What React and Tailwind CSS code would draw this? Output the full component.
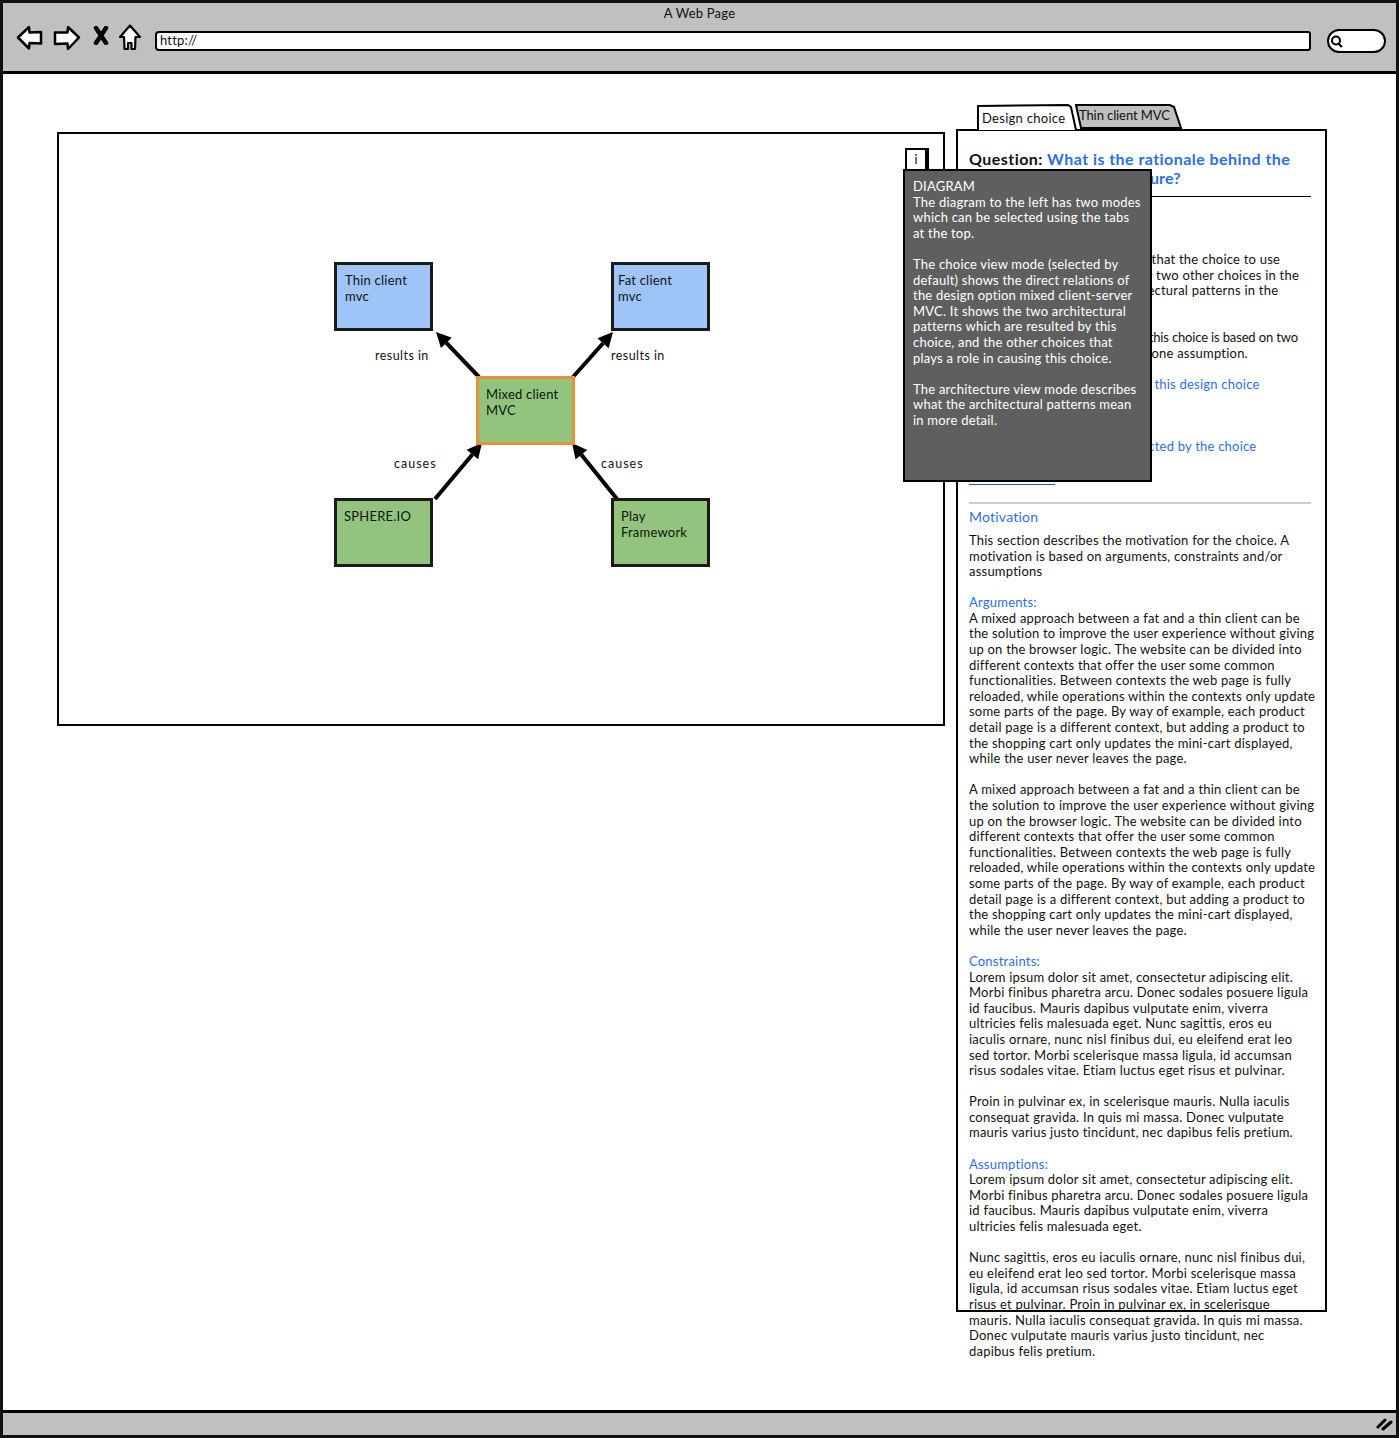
const argumentLines = [
  'A mixed approach between a fat and a thin client can be',
  'the solution to improve the user experience without giving',
  'up on the browser logic. The website can be divided into',
  'different contexts that offer the user some common',
  'functionalities. Between contexts the web page is fully',
  'reloaded, while operations within the contexts only update',
  'some parts of the page. By way of example, each product',
  'detail page is a different context, but adding a product to',
  'the shopping cart only updates the mini-cart displayed,',
  'while the user never leaves the page.',
]

const topLines = [
  { t: 'This section describes the fact that the choice to use' },
  { t: 'mixed client-server MVC led to two other choices in the' },
  { t: 'diagram and also to two architectural patterns in the' },
  { t: 'diagram.' },
  { t: '' },
  { t: 'The motivation then shows that this choice is based on two', tight: true },
  { t: 'arguments, one constraint and one assumption.' },
  { t: '' },
  { t: 'Other choices that depends on this design choice', blue: true },
  { t: '' },
  { t: '' },
  { t: '' },
  { t: 'The architectural patterns affected by the choice', blue: true },
  { t: '' },
  { t: 'Related choice', link: true },
]

const bodyLines = [
  { t: 'This section describes the motivation for the choice. A' },
  { t: 'motivation is based on arguments, constraints and/or' },
  { t: 'assumptions' },
  { t: '' },
  { t: 'Arguments:', blue: true },
  ...argumentLines.map((t) => ({ t })),
  { t: '' },
  ...argumentLines.map((t) => ({ t })),
  { t: '' },
  { t: 'Constraints:', blue: true },
  { t: 'Lorem ipsum dolor sit amet, consectetur adipiscing elit.' },
  { t: 'Morbi finibus pharetra arcu. Donec sodales posuere ligula' },
  { t: 'id faucibus. Mauris dapibus vulputate enim, viverra' },
  { t: 'ultricies felis malesuada eget. Nunc sagittis, eros eu' },
  { t: 'iaculis ornare, nunc nisl finibus dui, eu eleifend erat leo' },
  { t: 'sed tortor. Morbi scelerisque massa ligula, id accumsan' },
  { t: 'risus sodales vitae. Etiam luctus eget risus et pulvinar.' },
  { t: '' },
  { t: 'Proin in pulvinar ex, in scelerisque mauris. Nulla iaculis' },
  { t: 'consequat gravida. In quis mi massa. Donec vulputate' },
  { t: 'mauris varius justo tincidunt, nec dapibus felis pretium.' },
  { t: '' },
  { t: 'Assumptions:', blue: true },
  { t: 'Lorem ipsum dolor sit amet, consectetur adipiscing elit.' },
  { t: 'Morbi finibus pharetra arcu. Donec sodales posuere ligula' },
  { t: 'id faucibus. Mauris dapibus vulputate enim, viverra' },
  { t: 'ultricies felis malesuada eget.' },
  { t: '' },
  { t: 'Nunc sagittis, eros eu iaculis ornare, nunc nisl finibus dui,' },
  { t: 'eu eleifend erat leo sed tortor. Morbi scelerisque massa' },
  { t: 'ligula, id accumsan risus sodales vitae. Etiam luctus eget' },
  { t: 'risus et pulvinar. Proin in pulvinar ex, in scelerisque' },
  { t: 'mauris. Nulla iaculis consequat gravida. In quis mi massa.' },
  { t: 'Donec vulputate mauris varius justo tincidunt, nec' },
  { t: 'dapibus felis pretium.' },
]

const tooltipLines = [
  'DIAGRAM',
  'The diagram to the left has two modes',
  'which can be selected using the tabs',
  'at the top.',
  '',
  'The choice view mode (selected by',
  'default) shows the direct relations of',
  'the design option mixed client-server',
  'MVC. It shows the two architectural',
  'patterns which are resulted by this',
  'choice, and the other choices that',
  'plays a role in causing this choice.',
  '',
  'The architecture view mode describes',
  'what the architectural patterns mean',
  'in more detail.',
]

// regels onder elkaar, vaste hoogte zodat de tekst niet verschuift
const Lines = ({ lines }) => (
  <div className="text-[13px] leading-[15.6px] tracking-[0.22px] whitespace-nowrap text-[#111]">
    {lines.map((line, i) => (
      <div
        key={i}
        className={
          line.link
            ? 'h-[15.6px] text-[#1f5fc4] underline underline-offset-[2px]'
            : line.blue
              ? 'h-[15.6px] text-[#2c6fe8]'
              : line.tight
                ? 'h-[15.6px] tracking-[-0.15px]'
                : 'h-[15.6px]'
        }
      >
        {line.t}
      </div>
    ))}
  </div>
)

const Arrow = ({ x1, y1, x2, y2 }) => {
  const a = Math.atan2(y2 - y1, x2 - x1)
  const len = 15
  const half = 7.5
  const bx = x2 - Math.cos(a) * len
  const by = y2 - Math.sin(a) * len
  const px = -Math.sin(a) * half
  const py = Math.cos(a) * half
  return (
    <g>
      <line x1={x1} y1={y1} x2={bx} y2={by} stroke="#000" strokeWidth="4" />
      <polygon points={`${x2},${y2} ${bx + px},${by + py} ${bx - px},${by - py}`} fill="#000" />
    </g>
  )
}

const Node = ({ className, lines }) => (
  <div className={`absolute w-[99px] h-[69px] text-[13px] leading-[16px] tracking-[0.22px] text-[#111] ${className}`}>
    {lines.map((l) => (
      <div key={l}>{l}</div>
    ))}
  </div>
)

const Label = ({ className, children }) => (
  <div className={`absolute text-[12.5px] leading-[16px] text-[#111] whitespace-nowrap ${className}`}>
    {children}
  </div>
)

const Toolbar = () => (
  <div className="flex items-start h-[33px] pl-[13px] pr-[10px]">
    <svg width="27" height="26" viewBox="0 0 27 26" className="mt-[1px]">
      <path d="M2 12.5 L13 2 L13.5 7.5 L25 7 L25 18.5 L13.5 18 L13 23.5 Z" fill="#fff" stroke="#000" strokeWidth="2.5" strokeLinejoin="round" />
    </svg>
    <svg width="28" height="26" viewBox="0 0 28 26" className="ml-[10px] mt-[1px]">
      <path d="M26 12.5 L15 2 L14.5 7.5 L2 7.5 L2 19 L14.5 18.5 L15 24 Z" fill="#fff" stroke="#000" strokeWidth="2.5" strokeLinejoin="round" />
    </svg>
    <svg width="16" height="19" viewBox="0 0 16 19" className="ml-[12px] mt-[2px]">
      <path d="M3 2 L13 17 M13 2 L3 17" stroke="#000" strokeWidth="4.5" strokeLinecap="round" />
    </svg>
    <svg width="22" height="27" viewBox="0 0 22 27" className="ml-[10px]">
      <path d="M11 1.5 L21 13 L16.5 13 L16 25 L12.5 25 L12.5 19 L9 19 L9 25 L5.5 25 L5 13 L1 13 Z" fill="#fff" stroke="#000" strokeWidth="2.2" strokeLinejoin="round" />
    </svg>
    <div className="ml-[14px] mt-[7px] flex-1 h-[20px] bg-white border-[2px] border-black rounded-l-[4px] rounded-r-[3px] pl-[3px] text-[13px] leading-[15px] tracking-[0.2px] text-[#111]">
      http://
    </div>
    <div className="ml-[16px] mt-[5px] w-[59px] h-[24px] bg-white border-[2px] border-black rounded-[12px] flex items-center">
      <svg width="16" height="16" viewBox="0 0 16 16">
        <circle cx="7" cy="7.5" r="4" fill="#fff" stroke="#000" strokeWidth="2" />
        <line x1="9.5" y1="10.5" x2="13" y2="14" stroke="#000" strokeWidth="2.2" />
      </svg>
    </div>
  </div>
)

const Diagram = () => (
  <div className="relative mt-[28px] w-[888px] h-[594px] border-[2px] border-black bg-white shrink-0">
    <svg width="884" height="590" viewBox="59 135 884 590" className="absolute left-0 top-0">
      <Arrow x1={479} y1={378} x2={436} y2={333} />
      <Arrow x1={573} y1={378} x2={613} y2={333} />
      <Arrow x1={435} y1={500} x2={482} y2={444} />
      <Arrow x1={617} y1={500} x2={572} y2={444} />
    </svg>
    <Node className="left-[275px] top-[128px] pt-[7px] pl-[8px] bg-[#9fc5f8] border-[3px] border-[#1a1a1a]" lines={['Thin client', 'mvc']} />
    <Node className="left-[552px] top-[128px] pt-[7px] pl-[4px] bg-[#9fc5f8] border-[3px] border-[#1a1a1a]" lines={['Fat client', 'mvc']} />
    <Node className="left-[417px] top-[242px] pt-[7px] pl-[7px] bg-[#93c47d] border-[3px] border-[#e69138]" lines={['Mixed client', 'MVC']} />
    <Node className="left-[275px] top-[364px] pt-[7px] pl-[7px] bg-[#93c47d] border-[3px] border-[#1a1a1a]" lines={['SPHERE.IO']} />
    <Node className="left-[552px] top-[364px] pt-[7px] pl-[7px] bg-[#93c47d] border-[3px] border-[#1a1a1a]" lines={['Play', 'Framework']} />
    <Label className="left-[316px] top-[214px] tracking-[0.45px]">results in</Label>
    <Label className="left-[552px] top-[214px] tracking-[0.45px]">results in</Label>
    <Label className="left-[335px] top-[322px] tracking-[1px]">causes</Label>
    <Label className="left-[542px] top-[322px] tracking-[1px]">causes</Label>
    <div className="absolute left-[846px] top-[14px] w-[24px] h-[22px] bg-white border-t-[2px] border-l-[2px] border-black border-r-[4px] text-center text-[13px] leading-[19px] text-[#111]">
      i
    </div>
  </div>
)

const Tabs = () => (
  <div className="flex h-[26px] ml-[21px] relative z-10 -mb-[1px]">
    <div className="relative w-[96px] h-[27px] pt-[6px] pl-[5px] text-[13px] leading-[16px] tracking-[0.28px] text-[#111]">
      <svg width="100" height="27" viewBox="0 0 100 27" className="absolute left-0 top-0 -z-10">
        <path d="M1 26 L1 2 L91 1 L94 3 L99 26" fill="#fff" stroke="#000" strokeWidth="2" />
      </svg>
      Design choice
    </div>
    <div className="relative w-[108px] h-[25px] pt-[3px] pl-[6px] text-[13px] leading-[16px] tracking-[-0.1px] text-[#111]">
      <svg width="110" height="25" viewBox="0 0 110 25" className="absolute left-0 top-0 -z-10">
        <path d="M3 1 L97 1 L101 3 L108 24 L8 24 Z" fill="#c0c0c0" stroke="#000" strokeWidth="2" />
      </svg>
      Thin client MVC
    </div>
  </div>
)

const Panel = () => (
  <div className="ml-[11px] w-[371px] shrink-0">
    <Tabs />
    <div className="h-[1183px] border-[2px] border-black bg-white pl-[11px] pr-[14px] pt-[18px]">
      <div className="text-[16px] leading-[19px] font-bold tracking-[0.45px] whitespace-nowrap text-[#111]">
        <div>
          Question: <span className="text-[#2c6fe8]">What is the rationale behind the</span>
        </div>
        <div className="text-[#2c6fe8] tracking-[0.15px]">the mixed MVC architecture?</div>
      </div>
      <div className="mt-[9px] h-[1px] bg-black" />
      <div className="mt-[14px] h-[41px] text-[14px] leading-[20px] text-[#2c6fe8]">Summary</div>
      <Lines lines={topLines} />
      <div className="mt-[16px] h-[2px] bg-[#cfcfcf]" />
      <div className="text-[14px] leading-[20px] tracking-[0.22px] text-[#2c6fe8] mt-[3px] mb-[6px]">Motivation</div>
      <Lines lines={bodyLines} />
    </div>
  </div>
)

const Tooltip = () => (
  <div className="absolute left-[900px] top-[95px] w-[249px] h-[313px] bg-[#5f5f5f] border-[2px] border-black pl-[8px] pt-[8px] text-[13px] leading-[15.6px] tracking-[0.22px] text-white whitespace-nowrap z-20">
    {tooltipLines.map((l, i) => (
      <div key={i} className="h-[15.6px]">
        {l}
      </div>
    ))}
  </div>
)

const App = () => (
  <div className="w-[1399px] h-[1438px] flex flex-col border-[3px] border-[#111] bg-white overflow-hidden font-['Lato','Open_Sans',sans-serif]">
    <div className="h-[71px] shrink-0 bg-[#c0c0c0] border-b-[3px] border-black">
      <div className="h-[21px] text-center text-[13px] leading-[20px] tracking-[0.22px] text-[#111]">A Web Page</div>
      <Toolbar />
    </div>
    <div className="relative flex-1 flex items-start pl-[54px] pt-[30px]">
      <Diagram />
      <Panel />
      <Tooltip />
    </div>
    <div className="h-[25px] shrink-0 bg-[#c0c0c0] border-t-[3px] border-black flex justify-end items-center pr-[3px]">
      <svg width="17" height="14" viewBox="0 0 17 14">
        <path d="M2 10 L9 3 M7 12 L15 5" stroke="#000" strokeWidth="3" strokeLinecap="round" />
      </svg>
    </div>
  </div>
)

export default App
